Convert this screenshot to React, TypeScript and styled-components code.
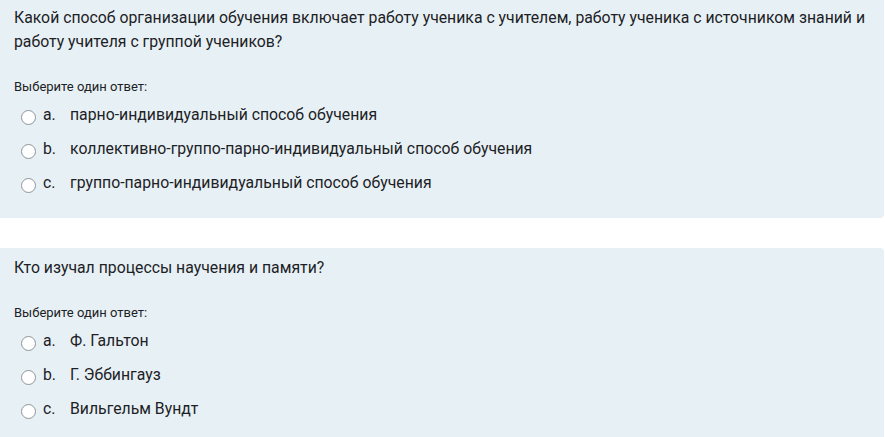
import React from "react"
import styled, {createGlobalStyle} from "styled-components"

const GlobalStyle = createGlobalStyle`
  body {
    margin: 0;
    background: #ffffff;
    font-family: Roboto, "Noto Sans", sans-serif;
    color: #1d2125;
  }
`

const Page = styled.div`
  display: flex;
  flex-direction: column;
  gap: 30px;
  width: 884px;
  margin-top: -2px;
`

const Formulation = styled.div`
  background: #e7f1f5;
  border-radius: 0 4px 4px 0;
  padding: 8px 14px 19px 14px;
`

const QText = styled.div`
  font-size: 15.8px;
  line-height: 24px;
`

const Prompt = styled.div`
  margin-top: 23px;
  font-size: 13px;
  line-height: 20px;
`

const Answers = styled.div`
  display: flex;
  flex-direction: column;
  padding-left: 7px;
`

const Row = styled.label`
  display: flex;
  align-items: center;
  height: 34px;
  font-size: 15.8px;
`

const Radio = styled.span`
  width: 15px;
  height: 15px;
  box-sizing: border-box;
  border: 1px solid #8f959a;
  border-radius: 50%;
  background: #ffffff;
  margin-top: 6px;
  margin-right: 7px;
  flex: none;
`

const Letter = styled.span`
  width: 27px;
  flex: none;
`

interface Question {
    text: string
    answers: string[]
}

const questions: Question[] = [
    {
        text: "Какой способ организации обучения включает работу ученика с учителем, работу ученика с источником знаний и работу учителя с группой учеников?",
        answers: [
            "парно-индивидуальный способ обучения",
            "коллективно-группо-парно-индивидуальный способ обучения",
            "группо-парно-индивидуальный способ обучения"
        ]
    },
    {
        text: "Кто изучал процессы научения и памяти?",
        answers: ["Ф. Гальтон", "Г. Эббингауз", "Вильгельм Вундт"]
    }
]

const letters = ["a.", "b.", "c."]

const QuestionCard = (props: {q: Question}) => (
    <Formulation>
        <QText>{props.q.text}</QText>
        <Prompt>Выберите один ответ:</Prompt>
        <Answers>
            {props.q.answers.map((a, i) => (
                <Row key={i}>
                    <Radio/>
                    <Letter>{letters[i]}</Letter>
                    <span>{a}</span>
                </Row>
            ))}
        </Answers>
    </Formulation>
)

export default function App() {
    return (<>
        <GlobalStyle/>
        <Page>
            {questions.map((q, i) => <QuestionCard key={i} q={q}/>)}
        </Page>
    </>)
}
